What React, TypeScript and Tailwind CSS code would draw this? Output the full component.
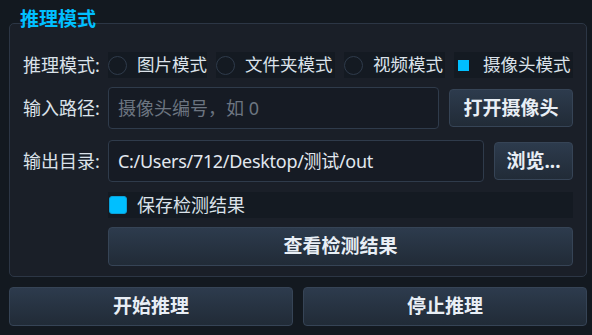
import React from "react";

const FONT = { fontFamily: '"Noto Sans", "Noto Sans CJK SC", sans-serif' };

function Radio({ label, checked, className = "" }: { label: string; checked?: boolean; className?: string }) {
  return (
    <div className={"flex shrink-0 items-center h-[26px] bg-[#141a22] whitespace-nowrap " + className}>
      {checked ? (
        <div className="w-[19px] h-[19px] flex items-center justify-center">
          <div className="w-[11px] h-[11px] bg-[#00bfff]" />
        </div>
      ) : (
        <div className="w-[19px] h-[19px] rounded-full border border-[#2f3b4b]" />
      )}
      <span className="ml-[10px] text-[17.5px] leading-none text-[#dbe2ea]">{label}</span>
    </div>
  );
}

function Btn({ children, className = "" }: { children: React.ReactNode; className?: string }) {
  return (
    <div
      className={
        "flex shrink-0 items-center justify-center whitespace-nowrap rounded-[4px] border border-[#364456] bg-gradient-to-b from-[#2d3b4d] to-[#212b37] text-[19px] font-bold text-[#e8eef5] " +
        className
      }
    >
      {children}
    </div>
  );
}

export default function App() {
  return (
    <div style={FONT} className="w-[592px] h-[335px] bg-[#131920] pl-[9px] pr-[5px] pt-[23px] overflow-hidden">
      <div className="relative h-[254px] rounded-[5px] border border-[#2c3645] bg-[#1a1f28] px-[13px] pt-[28px]">
        <div className="absolute left-[10px] -top-[14px] text-[19px] font-bold text-[#00bfff] leading-none whitespace-nowrap">
          推理模式
        </div>
        {/* radio row */}
        <div className="flex items-center h-[26px]">
          <div className="w-[85px] shrink-0 text-[18px] text-[#dbe2ea] leading-none whitespace-nowrap">推理模式:</div>
          <div className="flex gap-[9px]">
            <Radio label="图片模式" className="w-[99px]" />
            <Radio label="文件夹模式" className="w-[119px]" />
            <Radio label="视频模式" className="w-[101px]" />
            <Radio label="摄像头模式" checked className="w-[119px]" />
          </div>
        </div>
        {/* input row */}
        <div className="flex items-center mt-[9px] h-[42px]">
          <div className="w-[85px] shrink-0 text-[18px] text-[#dbe2ea] leading-none whitespace-nowrap">输入路径:</div>
          <div className="flex-1 h-[42px] flex items-center rounded-[4px] border border-[#2f3b4b] bg-[#161b24] px-[9px] text-[18px] text-[#6c7581] whitespace-nowrap">
            摄像头编号，如 0
          </div>
          <Btn className="ml-[10px] w-[124px] h-[38px]">打开摄像头</Btn>
        </div>
        {/* output row */}
        <div className="flex items-center mt-[11px] h-[42px]">
          <div className="w-[85px] shrink-0 text-[18px] text-[#dbe2ea] leading-none whitespace-nowrap">输出目录:</div>
          <div className="flex-1 h-[42px] flex items-center rounded-[4px] border border-[#2f3b4b] bg-[#161b24] px-[9px] text-[18px] tracking-[-0.3px] text-[#e2e8ef] whitespace-nowrap">
            C:/Users/712/Desktop/测试/out
          </div>
          <Btn className="ml-[10px] w-[79px] h-[38px]">浏览...</Btn>
        </div>
        {/* checkbox row */}
        <div className="flex mt-[10px]">
          <div className="w-[85px] shrink-0" />
          <div className="flex-1 h-[26px] flex items-center bg-[#141a22]">
            <div className="ml-[1px] w-[18px] h-[18px] rounded-[3px] bg-[#00bfff] border border-[#0aa0d8]" />
            <span className="ml-[10px] text-[18px] leading-none text-[#dbe2ea] whitespace-nowrap">保存检测结果</span>
          </div>
        </div>
        {/* view button */}
        <div className="flex mt-[9px]">
          <div className="w-[85px] shrink-0" />
          <Btn className="flex-1 h-[39px]">查看检测结果</Btn>
        </div>
      </div>
      <div className="flex gap-[10px] mt-[10px]">
        <Btn className="flex-1 h-[39px]">开始推理</Btn>
        <Btn className="flex-1 h-[39px]">停止推理</Btn>
      </div>
    </div>
  );
}
